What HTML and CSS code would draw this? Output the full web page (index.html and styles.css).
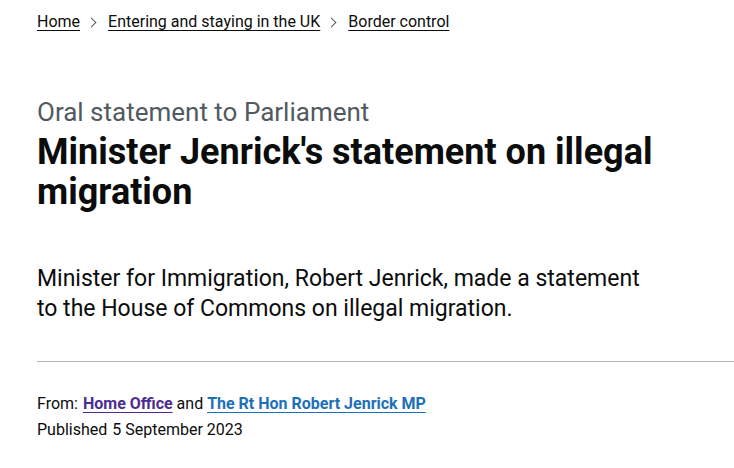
FILE: index.html
```html
<!DOCTYPE html>
<html lang="en">
<head>
  <meta charset="UTF-8" />
  <meta name="viewport" content="width=device-width, initial-scale=1.0" />
  <title>Minister Jenrick's statement on illegal migration</title>
  <link rel="stylesheet" href="styles.css">
</head>
<body>
  <div class="page">
    <nav class="breadcrumbs">
      <ol>
        <li><a href="#">Home</a></li>
        <li><a href="#">Entering and staying in the UK</a></li>
        <li><a href="#">Border control</a></li>
      </ol>
    </nav>

    <div class="title-block">
      <span class="caption">Oral statement to Parliament</span>
      <h1>Minister Jenrick's statement on illegal migration</h1>
    </div>

    <p class="lede">Minister for Immigration, Robert Jenrick, made a statement to the House of Commons on illegal migration.</p>

    <hr class="divider" />

    <dl class="metadata">
      <div class="meta-row">
        <dt>From:</dt>
        <dd><a href="#" class="visited">Home Office</a> and <a href="#">The Rt Hon Robert Jenrick MP</a></dd>
      </div>
      <div class="meta-row">
        <dt>Published</dt>
        <dd>5 September 2023</dd>
      </div>
    </dl>
  </div>
</body>
</html>
```

FILE: styles.css
```css
body {
  margin: 0;
  font-family: Roboto, Arial, sans-serif;
  color: #0b0c0c;
  background: #fff;
}
.page {
  padding: 0 0 0 37px;
}
a {
  color: #0b0c0c;
  text-decoration: underline;
  text-underline-offset: 3px;
  text-decoration-thickness: 1px;
}
.breadcrumbs ol {
  list-style: none;
  margin: 0;
  padding: 10px 0 0;
  display: flex;
  font-size: 16px;
  line-height: 24px;
}
.breadcrumbs li {
  display: flex;
  align-items: center;
}
.breadcrumbs li + li::before {
  content: "";
  width: 6px;
  height: 6px;
  border-top: 1px solid #505a5f;
  border-right: 1px solid #505a5f;
  transform: rotate(45deg);
  margin: 0 13px 0 8px;
}
.title-block {
  margin-top: 62px;
  max-width: 660px;
}
.caption {
  display: block;
  font-size: 26px;
  line-height: 32px;
  color: #505a5f;
}
h1 {
  margin: 4px 0 0;
  font-size: 36px;
  line-height: 40px;
  font-weight: 700;
}
.lede {
  margin: 52px 0 0;
  max-width: 615px;
  font-size: 23px;
  line-height: 30px;
}
.divider {
  margin: 37px 0 0;
  border: 0;
  border-top: 1px solid #b1b4b6;
}
.metadata {
  margin: 29px 0 0;
  font-size: 16px;
  line-height: 26px;
}
.meta-row {
  display: flex;
  gap: 5px;
}
.metadata dt,
.metadata dd {
  margin: 0;
}
.metadata dd a {
  font-weight: 700;
  color: #1d70b8;
}
.metadata dd a.visited {
  color: #4c2c92;
}
```
